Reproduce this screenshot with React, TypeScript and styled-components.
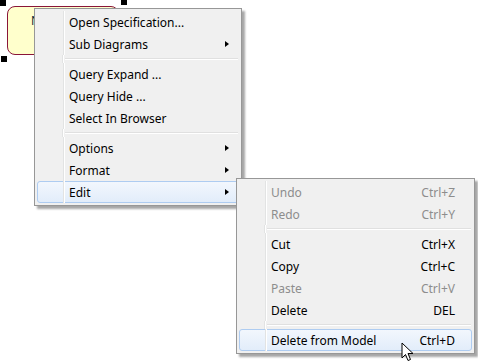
import styled, { createGlobalStyle, css } from "styled-components";

type Entry =
  | { kind: "sep" }
  | {
      kind?: "item";
      text: string;
      shortcut?: string;
      submenu?: boolean;
      disabled?: boolean;
      active?: boolean;
    };

const mainMenu: Entry[] = [
  { text: "Open Specification..." },
  { text: "Sub Diagrams", submenu: true },
  { kind: "sep" },
  { text: "Query Expand ..." },
  { text: "Query Hide ..." },
  { text: "Select In Browser" },
  { kind: "sep" },
  { text: "Options", submenu: true },
  { text: "Format", submenu: true },
  { text: "Edit", submenu: true, active: true },
];

const editMenu: Entry[] = [
  { text: "Undo", shortcut: "Ctrl+Z", disabled: true },
  { text: "Redo", shortcut: "Ctrl+Y", disabled: true },
  { kind: "sep" },
  { text: "Cut", shortcut: "Ctrl+X" },
  { text: "Copy", shortcut: "Ctrl+C" },
  { text: "Paste", shortcut: "Ctrl+V", disabled: true },
  { text: "Delete", shortcut: "DEL" },
  { kind: "sep" },
  { text: "Delete from Model", shortcut: "Ctrl+D", active: true },
];

const GlobalStyle = createGlobalStyle`
  html, body {
    margin: 0;
    padding: 0;
    background: #ffffff;
  }
  body {
    font-family: "Noto Sans", "Liberation Sans", sans-serif;
    font-size: 12px;
  }
`;

function Menu({ items, left, top, width }: { items: Entry[]; left: number; top: number; width: number }) {
  return (
    <MenuBox style={{ left, top, width }}>
      {items.map((it, i) => {
        if (it.kind === "sep") return <Separator key={i} />;
        return (
          <Item key={i} $active={!!it.active} $disabled={!!it.disabled}>
            <Gutter />
            <Label>{it.text}</Label>
            {it.shortcut && <Shortcut>{it.shortcut}</Shortcut>}
            {it.submenu && <Arrow />}
          </Item>
        );
      })}
    </MenuBox>
  );
}

export default function App() {
  return (
    <>
      <GlobalStyle />
      <Canvas>
        <Node>
          <NodeName>Node</NodeName>
        </Node>
        <Handle style={{ left: 0, top: 0 }} />
        <Handle style={{ left: 121, top: -1 }} />
        <Handle style={{ left: 1, top: 56 }} />
        <Menu items={mainMenu} left={34} top={8} width={208} />
        <Menu items={editMenu} left={236} top={178} width={239} />
        <Cursor viewBox="0 0 13 21" width="13" height="21">
          <path
            d="M1 1 L1 16 L4.5 12.5 L7 18.5 L9.5 17.5 L7 11.5 L12 11.5 Z"
            fill="#ffffff"
            stroke="#000000"
            strokeWidth="1"
            strokeLinejoin="miter"
          />
        </Cursor>
      </Canvas>
    </>
  );
}

const Canvas = styled.div`
  position: relative;
  width: 478px;
  height: 364px;
  overflow: hidden;
  background: #ffffff;
`;

const Node = styled.div`
  position: absolute;
  left: 7px;
  top: 6px;
  width: 110px;
  height: 47px;
  border: 1px solid #8a1538;
  border-radius: 8px;
  background: #ffffcc;
`;

const NodeName = styled.div`
  padding: 5px 0 0 23px;
  font-size: 12px;
  color: #0b2a3a;
`;

const Handle = styled.div`
  position: absolute;
  width: 6px;
  height: 6px;
  background: #000000;
`;

const MenuBox = styled.div`
  position: absolute;
  box-sizing: border-box;
  background: #f0f0f0;
  border: 1px solid #979797;
  padding: 2px;
  box-shadow: 3px 3px 2px rgba(0, 0, 0, 0.35);
  display: flex;
  flex-direction: column;
`;

const Item = styled.div<{ $active: boolean; $disabled: boolean }>`
  position: relative;
  height: 22px;
  display: flex;
  align-items: center;
  box-sizing: border-box;
  border: 1px solid transparent;
  border-radius: 3px;
  color: ${({ $disabled }) => ($disabled ? "#8d8d8d" : "#000000")};
  ${({ $active }) =>
    $active &&
    css`
      border-color: #aeccf1;
      background: linear-gradient(to bottom, #f2f7fd, #e2edfa);
    `}
`;

const Gutter = styled.div`
  position: absolute;
  left: 25px;
  top: -1px;
  bottom: -1px;
  width: 1px;
  background: #e2e3e3;
  border-right: 1px solid #ffffff;
  ${Item}[class] & {
  }
`;

const Label = styled.span`
  flex: 1;
  padding-left: 31px;
  white-space: nowrap;
`;

const Shortcut = styled.span`
  padding-right: 16px;
  white-space: nowrap;
`;

const Arrow = styled.span`
  width: 0;
  height: 0;
  margin-right: 9px;
  border-top: 3.5px solid transparent;
  border-bottom: 3.5px solid transparent;
  border-left: 4px solid #000000;
`;

const Separator = styled.div`
  height: 8px;
  position: relative;
  &::before {
    content: "";
    position: absolute;
    left: 25px;
    top: 0;
    bottom: 0;
    width: 1px;
    background: #e2e3e3;
    border-right: 1px solid #ffffff;
  }
  &::after {
    content: "";
    position: absolute;
    left: 28px;
    right: 1px;
    top: 3px;
    height: 1px;
    background: #e0e0e0;
    border-bottom: 1px solid #ffffff;
  }
`;

const Cursor = styled.svg`
  position: absolute;
  left: 401px;
  top: 342px;
`;
